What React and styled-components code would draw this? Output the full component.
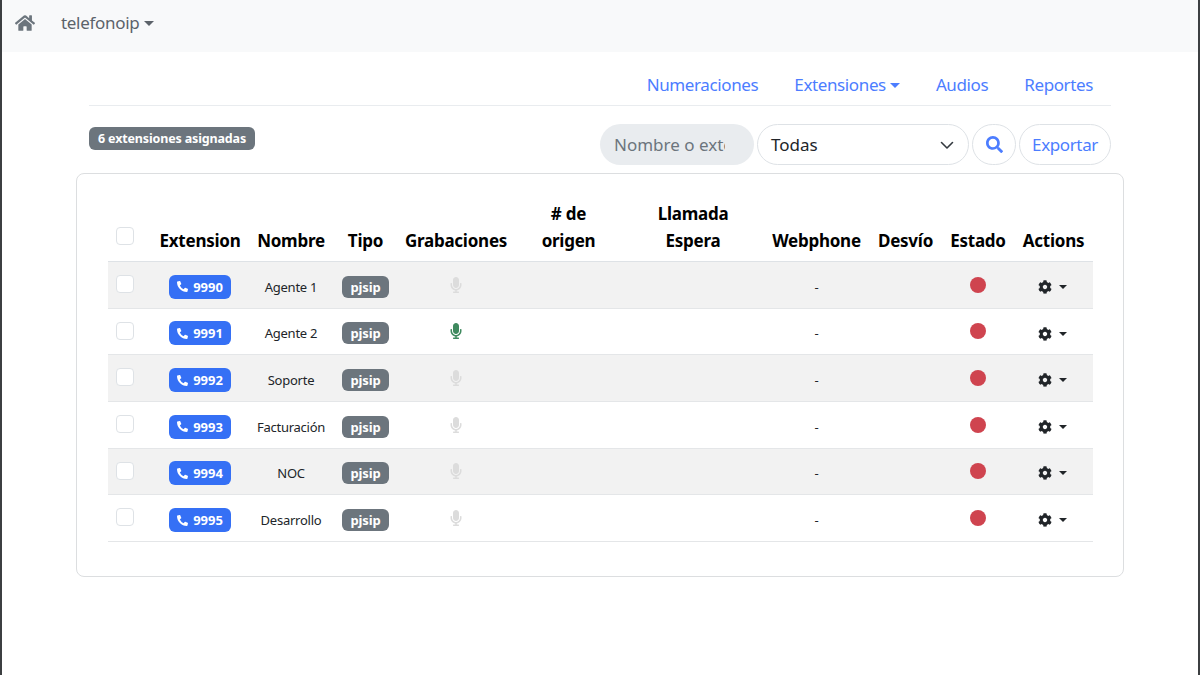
import React from "react";
import styled, { createGlobalStyle } from "styled-components";
import { FaHome, FaPhoneAlt, FaMicrophone, FaCog, FaSearch } from "react-icons/fa";

const GlobalStyle = createGlobalStyle`
  html, body {
    margin: 0;
    height: 100%;
    background: #fff;
  }
  * {
    box-sizing: border-box;
  }
  body {
    font-family: "Noto Sans", "Open Sans", sans-serif;
    color: #212529;
    overflow: hidden;
  }
`;

const Page = styled.div`
  height: 675px;
  border-left: 2px solid #3c3f41;
  border-right: 2px solid #3c3f41;
`;

const Navbar = styled.nav`
  height: 52px;
  background: #f8f9fa;
  display: flex;
  align-items: flex-start;
  padding: 13px 0 0 13px;
  color: #6c757d;
`;

const HomeLink = styled.a`
  width: 46px;
  height: 20px;
  font-size: 20px;
  line-height: 20px;
  color: #6c757d;
`;

const Brand = styled.a`
  font-size: 17px;
  line-height: 20px;
  color: #5c636a;
  display: flex;
  align-items: center;
  letter-spacing: -0.3px;
`;

const Caret = styled.span`
  display: inline-block;
  margin-left: ${(p) => p.$gap || 5}px;
  border-top: ${(p) => p.$size || 5}px solid currentColor;
  border-left: ${(p) => p.$size || 5}px solid transparent;
  border-right: ${(p) => p.$size || 5}px solid transparent;
`;

const Container = styled.main`
  width: 1022px;
  margin: 0 auto;
`;

const Tabs = styled.div`
  height: 54px;
  border-bottom: 1px solid #e9ecef;
  display: flex;
  justify-content: flex-end;
  padding: 21px 18px 0 0;
  gap: 36px;
`;

const TabLink = styled.a`
  font-size: 17px;
  line-height: 24px;
  color: #4c7dff;
  display: flex;
  align-items: center;
  height: 24px;
  letter-spacing: -0.38px;
`;

const Toolbar = styled.div`
  display: flex;
  justify-content: space-between;
  align-items: flex-start;
  padding-top: 18px;
  height: 67px;
`;

const CountBadge = styled.span`
  margin-top: 3px;
  height: 23px;
  padding: 0 9px;
  border-radius: 6px;
  background: #6c757d;
  color: #fff;
  font-size: 12.5px;
  font-weight: 700;
  line-height: 23px;
  letter-spacing: -0.15px;
`;

const Filters = styled.div`
  display: flex;
  gap: 3px;
`;

const SearchInput = styled.input`
  width: 154px;
  height: 41px;
  border: 0;
  border-radius: 21px;
  background: #e9ecef;
  padding: 0 29px 0 14px;
  font-family: inherit;
  font-size: 17px;
  color: #495057;
  outline: none;
  &::placeholder {
    color: #6c757d;
    opacity: 1;
  }
`;

const SelectBox = styled.div`
  width: 212px;
  height: 41px;
  border: 1px solid #dee2e6;
  border-radius: 21px;
  background: #fff;
  padding: 0 13px;
  display: flex;
  align-items: center;
  justify-content: space-between;
  font-size: 17px;
  color: #212529;
`;

const RoundButton = styled.button`
  height: 41px;
  width: ${(p) => p.$width}px;
  padding: 0;
  border: 1px solid #dee2e6;
  border-radius: 21px;
  background: #fff;
  color: #4c7dff;
  font-family: inherit;
  font-size: 17px;
  letter-spacing: -0.38px;
  display: flex;
  align-items: center;
  justify-content: center;
`;

const Card = styled.section`
  margin: 0 -13px;
  height: 404px;
  border: 1px solid #dcdee0;
  border-radius: 8px;
  padding: 23px 31px 0;
`;

const Table = styled.table`
  width: 985px;
  table-layout: fixed;
  border-collapse: separate;
  border-spacing: 0;
  text-align: center;
`;

const HeadCell = styled.th`
  height: 65px;
  padding: 0 0 7px;
  vertical-align: bottom;
  white-space: pre-line;
  font-size: 17px;
  line-height: 26.5px;
  font-weight: 700;
  color: #000;
  letter-spacing: -0.25px;
  border-bottom: 1px solid #dee2e6;
`;

const Row = styled.tr`
  height: 46.67px;
  background: ${(p) => (p.$striped ? "#f2f2f2" : "#fff")};
`;

const Cell = styled.td`
  padding: 4px 0 0;
  font-size: 13px;
  letter-spacing: -0.25px;
  color: #212529;
  vertical-align: middle;
  border-bottom: 1px solid #e4e6e8;
`;

const CheckCell = styled(Cell)`
  vertical-align: top;
  text-align: left;
  padding: 13px 0 0 8px;
`;

const HeadCheck = styled.span`
  display: block;
  width: 18px;
  height: 18px;
  margin: 0 0 9px 8px;
  background: #fff;
  border: 1px solid #dee2e6;
  border-radius: 4px;
`;

const Checkbox = styled.span`
  display: block;
  width: 18px;
  height: 18px;
  background: #fff;
  border: 1px solid #dee2e6;
  border-radius: 4px;
`;

const ExtButton = styled.span`
  display: inline-flex;
  vertical-align: middle;
  align-items: center;
  justify-content: center;
  gap: 5px;
  width: 62px;
  height: 24px;
  border-radius: 6px;
  background: #3570f5;
  color: #fff;
  font-size: 13px;
  font-weight: 700;
  letter-spacing: 0;
  svg {
    font-size: 11px;
  }
`;

const TypeBadge = styled.span`
  display: inline-block;
  vertical-align: middle;
  width: 47px;
  height: 22px;
  line-height: 22px;
  border-radius: 6px;
  background: #6c757d;
  color: #fff;
  font-size: 13px;
  font-weight: 700;
  letter-spacing: -0.1px;
`;

const Mic = styled(FaMicrophone)`
  display: block;
  margin: -4px auto 0;
  font-size: 16px;
  color: ${(p) => (p.$active ? "#3f8a5f" : "#dcdcdc")};
`;

const StatusDot = styled.span`
  display: block;
  width: 16px;
  height: 16px;
  margin: -4px auto 0;
  border-radius: 50%;
  background: #cf444f;
`;

const ActionsToggle = styled.span`
  display: inline-flex;
  vertical-align: middle;
  align-items: center;
  margin: -3px 2px 0 0;
  color: #212529;
  font-size: 14px;
`;

const columns = [
  { label: "", width: 44, check: true },
  { label: "Extension", width: 96 },
  { label: "Nombre", width: 86 },
  { label: "Tipo", width: 63 },
  { label: "Grabaciones", width: 118 },
  { label: "# de\norigen", width: 107 },
  { label: "Llamada\nEspera", width: 142 },
  { label: "Webphone", width: 105 },
  { label: "Desvío", width: 73 },
  { label: "Estado", width: 72 },
  { label: "Actions", width: 79 },
];

const extensions = [
  { ext: "9990", name: "Agente 1" },
  { ext: "9991", name: "Agente 2", recording: true },
  { ext: "9992", name: "Soporte" },
  { ext: "9993", name: "Facturación" },
  { ext: "9994", name: "NOC" },
  { ext: "9995", name: "Desarrollo" },
];

const Chevron = () => (
  <svg width="16" height="16" viewBox="0 0 16 16" fill="none">
    <path d="M2.5 5.5 8 11l5.5-5.5" stroke="#343a40" strokeWidth="1.6" strokeLinecap="round" strokeLinejoin="round" />
  </svg>
);

export default function App() {
  return (
    <Page>
      <GlobalStyle />
      <Navbar>
        <HomeLink><FaHome /></HomeLink>
        <Brand>telefonoip<Caret /></Brand>
      </Navbar>
      <Container>
        <Tabs>
          <TabLink>Numeraciones</TabLink>
          <TabLink>Extensiones<Caret $gap={4} /></TabLink>
          <TabLink>Audios</TabLink>
          <TabLink>Reportes</TabLink>
        </Tabs>
        <Toolbar>
          <CountBadge>6 extensiones asignadas</CountBadge>
          <Filters>
            <SearchInput placeholder="Nombre o extensión" />
            <SelectBox>Todas<Chevron /></SelectBox>
            <RoundButton $width={44}><FaSearch /></RoundButton>
            <RoundButton $width={92}>Exportar</RoundButton>
          </Filters>
        </Toolbar>
        <Card>
          <Table>
            <colgroup>
              {columns.map((c) => <col key={c.width + c.label} style={{ width: c.width }} />)}
            </colgroup>
            <thead>
              <tr>
                {columns.map((c) => (
                  <HeadCell key={c.width + c.label}>
                    {c.check ? <HeadCheck /> : c.label}
                  </HeadCell>
                ))}
              </tr>
            </thead>
            <tbody>
              {extensions.map((item, index) => (
                <Row key={item.ext} $striped={index % 2 === 0}>
                  <CheckCell><Checkbox /></CheckCell>
                  <Cell><ExtButton><FaPhoneAlt />{item.ext}</ExtButton></Cell>
                  <Cell>{item.name}</Cell>
                  <Cell><TypeBadge>pjsip</TypeBadge></Cell>
                  <Cell><Mic $active={item.recording} /></Cell>
                  <Cell />
                  <Cell />
                  <Cell>-</Cell>
                  <Cell />
                  <Cell><StatusDot /></Cell>
                  <Cell>
                    <ActionsToggle><FaCog /><Caret $size={4} $gap={7} /></ActionsToggle>
                  </Cell>
                </Row>
              ))}
            </tbody>
          </Table>
        </Card>
      </Container>
    </Page>
  );
}
